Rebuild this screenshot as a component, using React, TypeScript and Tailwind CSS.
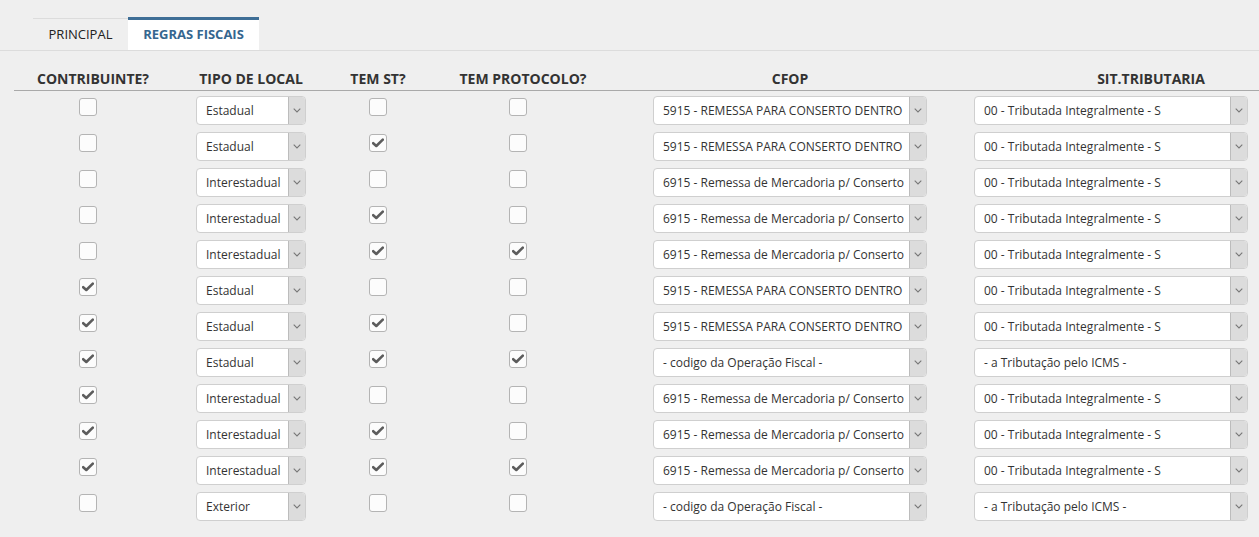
import React from 'react';

type Row = { contrib: boolean; tipo: string; st: boolean; proto: boolean; cfop: string; sit: string };

const CFOP_5915 = '5915 - REMESSA PARA CONSERTO DENTRO';
const CFOP_6915 = '6915 - Remessa de Mercadoria p/ Conserto';
const CFOP_NONE = '- codigo da Operação Fiscal -';
const SIT_00 = '00 - Tributada Integralmente - S';
const SIT_NONE = '- a Tributação pelo ICMS -';

const rows: Row[] = [
  { contrib: false, tipo: 'Estadual', st: false, proto: false, cfop: CFOP_5915, sit: SIT_00 },
  { contrib: false, tipo: 'Estadual', st: true, proto: false, cfop: CFOP_5915, sit: SIT_00 },
  { contrib: false, tipo: 'Interestadual', st: false, proto: false, cfop: CFOP_6915, sit: SIT_00 },
  { contrib: false, tipo: 'Interestadual', st: true, proto: false, cfop: CFOP_6915, sit: SIT_00 },
  { contrib: false, tipo: 'Interestadual', st: true, proto: true, cfop: CFOP_6915, sit: SIT_00 },
  { contrib: true, tipo: 'Estadual', st: false, proto: false, cfop: CFOP_5915, sit: SIT_00 },
  { contrib: true, tipo: 'Estadual', st: true, proto: false, cfop: CFOP_5915, sit: SIT_00 },
  { contrib: true, tipo: 'Estadual', st: true, proto: true, cfop: CFOP_NONE, sit: SIT_NONE },
  { contrib: true, tipo: 'Interestadual', st: false, proto: false, cfop: CFOP_6915, sit: SIT_00 },
  { contrib: true, tipo: 'Interestadual', st: true, proto: false, cfop: CFOP_6915, sit: SIT_00 },
  { contrib: true, tipo: 'Interestadual', st: true, proto: true, cfop: CFOP_6915, sit: SIT_00 },
  { contrib: false, tipo: 'Exterior', st: false, proto: false, cfop: CFOP_NONE, sit: SIT_NONE },
];

const cols = 'grid grid-cols-[158px_158px_96px_194px_340px_382px]';

function Check({ checked }: { checked: boolean }) {
  return (
    <div className="w-[18px] h-[18px] rounded-[3px] border border-[#b4b4b4] bg-[#fcfcfc] flex items-center justify-center">
      {checked && (
        <svg width="12" height="10" viewBox="0 0 12 10">
          <path d="M1.2 5.2 L4.3 8 L10.8 1.6" fill="none" stroke="#5c5c5c" strokeWidth="2.6" strokeLinecap="round" strokeLinejoin="round" />
        </svg>
      )}
    </div>
  );
}

function Select({ value, width }: { value: string; width: string }) {
  return (
    <div className={`${width} h-[29px] flex bg-white border border-[#cfcfcf] rounded-[4px] overflow-hidden`}>
      <div className="flex-1 pl-[9px] flex items-center text-[12px] text-[#333] whitespace-nowrap overflow-hidden">{value}</div>
      <div className="w-[17px] bg-[#dcdcdc] border-l border-[#bcbcbc] flex items-center justify-center">
        <svg width="8" height="5" viewBox="0 0 8 5">
          <path d="M0.7 0.7 L4 3.9 L7.3 0.7" fill="none" stroke="#777" strokeWidth="1.1" />
        </svg>
      </div>
    </div>
  );
}

export default function App() {
  return (
    <div className="min-h-screen w-full bg-[#efefef] overflow-hidden font-['Open_Sans',sans-serif] text-[#333]">
      {/* tabs */}
      <div className="pt-[17px] border-b border-[#dcdcdc] flex pl-[33px]">
        <div className="mt-[1px] w-[95px] h-[32px] border-t border-[#dcdcdc] flex items-center justify-center text-[13px] text-[#222]">
          PRINCIPAL
        </div>
        <div className="w-[131px] h-[33px] bg-white border-t-[3px] border-[#3e6e96] flex items-center justify-center text-[13px] font-bold text-[#35668f]">
          REGRAS FISCAIS
        </div>
      </div>

      <div className="ml-[14px] mt-[14px] w-[1328px]">
        <div className={`${cols} h-[26px] pt-[2px] border-b border-[#a9a9a9] text-[14px] font-bold text-[#333] items-center`}>
          <div className="text-center">CONTRIBUINTE?</div>
          <div className="text-center">TIPO DE LOCAL</div>
          <div className="text-center">TEM ST?</div>
          <div className="text-center">TEM PROTOCOLO?</div>
          <div className="text-center">CFOP</div>
          <div className="text-center">SIT.TRIBUTARIA</div>
        </div>

        {rows.map((r, i) => (
          <div key={i} className={`${cols} h-[36px]`}>
            <div className="pl-[65px] pt-[7px]"><Check checked={r.contrib} /></div>
            <div className="pl-[24px] pt-[5px]"><Select value={r.tipo} width="w-[110px]" /></div>
            <div className="pl-[39px] pt-[7px]"><Check checked={r.st} /></div>
            <div className="pl-[83px] pt-[7px]"><Check checked={r.proto} /></div>
            <div className="pl-[33px] pt-[5px]"><Select value={r.cfop} width="w-[274px]" /></div>
            <div className="pl-[14px] pt-[5px]"><Select value={r.sit} width="w-[274px]" /></div>
          </div>
        ))}
      </div>
    </div>
  );
}
